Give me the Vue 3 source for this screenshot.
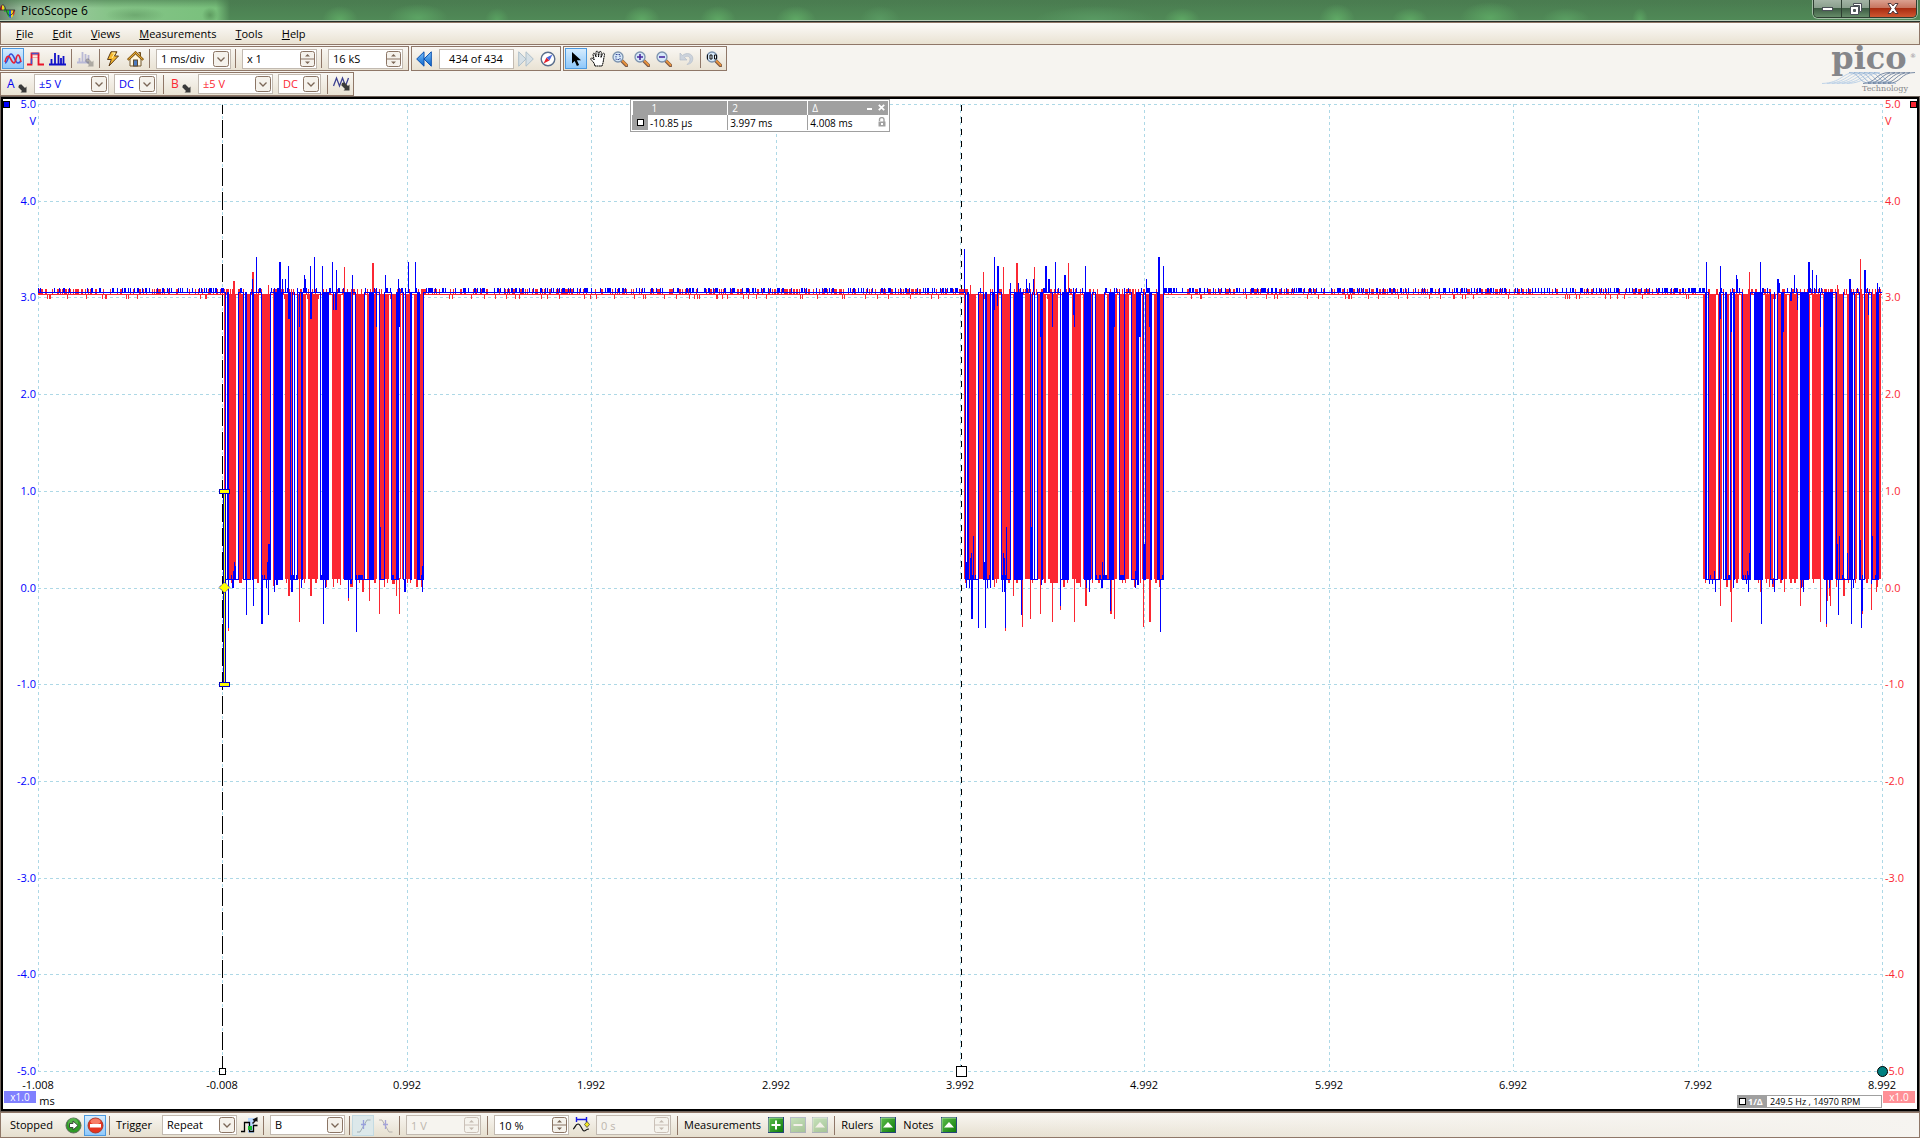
<script setup>
import { ref } from 'vue'

const menus = ['File', 'Edit', 'Views', 'Measurements', 'Tools', 'Help']

const timebase = ref('1 ms/div')
const zoomFactor = ref('x 1')
const samples = ref('16 kS')
const buffer = ref('434 of 434')
const rangeA = ref('±5 V')
const rangeB = ref('±5 V')
const couplingA = ref('DC')
const couplingB = ref('DC')
const triggerMode = ref('Repeat')
const triggerSource = ref('B')
const threshold = ref('1 V')
const preTrigger = ref('10 %')
const delay = ref('0 s')

/* graph geometry */
const plot = { left: 38, right: 1882, top: 104, bottom: 1071 }
const gridX = Array.from({ length: 11 }, (_, i) => Math.round(plot.left + i * 184.4))
const gridY = Array.from({ length: 11 }, (_, i) => Math.round(plot.top + i * 96.7))
const timeLabels = gridX.map((x, i) => ({ x, text: (i - 1.008).toFixed(3) }))
const voltLabels = gridY.map((y, i) => ({ y: y + 4, text: (5 - i).toFixed(1) }))

const HIGH_A = 292
const HIGH_B = 294
const LOW = 579

/* Bursts: bars and levels are [start, width] and [start, end] in pixels from the
   burst origin; spikes are [x, y, width] with x and y in thirds of a pixel. */
const message = {
  blue: [[25, 1], [27, 2], [38, 1], [43, 1], [45, 2], [50, 1], [52, 2], [61, 1], [70, 1], [74, 6], [80, 3], [90, 1], [92, 1], [94, 1], [97, 1], [101, 2], [120, 1], [122, 7], [144, 7], [152, 1], [155, 1], [164, 1], [169, 5], [179, 1], [184, 1], [191, 1], [196, 3], [203, 1], [205, 1], [210, 2], [217, 3], [223, 1]],
  high: [[0, 25], [38, 43], [50, 61], [70, 90], [97, 120], [129, 144], [152, 155], [164, 169], [174, 179], [184, 191], [199, 203], [205, 210], [212, 217], [223, 240]],
  low: [[25, 38], [43, 50], [61, 70], [90, 97], [120, 129], [144, 148], [155, 173], [179, 184], [191, 199], [203, 205], [218, 223]],
  red: [[24, 1], [29, 7], [39, 4], [47, 3], [54, 5], [61, 9], [73, 1], [79, 1], [85, 5], [91, 1], [98, 8], [108, 10], [122, 7], [132, 9], [143, 1], [150, 2], [156, 8], [167, 10], [180, 4], [185, 4], [191, 5], [200, 1], [202, 1], [206, 4], [214, 3], [220, 4]]
}
const bursts = [
  {
    origin: 200, ...message,
    blueUp: [[157, 118], [169, 51], [180, 145], [213, 145], [238, 67, 2], [247, 118], [256, 118], [265, 79], [313, 105], [316, 118], [331, 79], [343, 51], [367, 79], [397, 67], [409, 91], [430, 145], [457, 105], [556, 105], [595, 118], [625, 67], [646, 67]],
    redUp: [[100, 123, 2], [157, 96, 2], [205, 136], [433, 82], [517, 70, 2]],
    blueSag: [[265, 237, 2], [283, 263], [297, 263], [331, 237, 2], [400, 210], [406, 210, 2], [529, 263], [598, 263]],
    blueDown: [[85, 1165], [98, 1046, 2], [139, 1125], [160, 1098], [184, 1152, 2], [199, 1046], [205, 1125], [223, 1058], [230, 1035, 2], [274, 1058, 2], [304, 1046], [370, 1152], [376, 1046], [445, 1074], [451, 1034, 2], [469, 1176], [614, 1058, 2], [667, 1058]],
    blueRise: [[100, 993], [103, 967], [106, 980], [202, 967], [205, 912, 2], [541, 862], [667, 978]],
    redDown: [[85, 1175], [94, 1031], [118, 1031, 3], [173, 1031, 2], [220, 1040], [259, 1031], [265, 1070, 2], [298, 1148], [313, 1031], [331, 1070, 2], [346, 1031, 2], [379, 1043], [400, 1043], [412, 1031], [421, 1037], [445, 1083], [451, 1043, 3], [478, 1031], [487, 1056, 2], [508, 1083], [523, 1031, 2], [538, 1122], [553, 1043], [562, 1031], [577, 1034, 3], [589, 1070], [598, 1122], [622, 1031], [630, 1031], [649, 1043, 2], [664, 1043]]
  },
  {
    origin: 940, ...message,
    blueUp: [[73, 27], [163, 51], [172, 79, 2], [211, 129], [235, 129], [260, 118], [268, 129], [280, 118], [317, 79, 2], [325, 118, 2], [346, 67], [373, 105, 2], [436, 79], [619, 118], [655, 51, 2], [670, 79]],
    redUp: [[91, 136], [130, 96], [190, 82], [229, 70, 2], [283, 82], [385, 70]],
    blueSag: [[163, 210], [172, 198], [301, 291], [337, 263], [400, 225], [403, 263], [523, 263], [598, 291, 2], [628, 263]],
    blueDown: [[79, 1046], [88, 1046], [94, 1137, 2], [115, 1164], [136, 1164], [142, 1046], [151, 1046], [187, 1058], [193, 1058], [196, 1165], [244, 1125], [304, 1035], [361, 1098], [439, 1046], [448, 1058], [484, 1046, 2], [511, 1113], [586, 1046], [592, 1035, 2], [661, 1176]],
    blueRise: [[79, 966], [91, 955], [94, 939], [100, 888], [133, 966], [190, 939], [193, 955], [199, 862], [274, 862, 2], [467, 966], [487, 966], [586, 993], [613, 912, 2]],
    redDown: [[76, 1031], [88, 1031], [163, 1043], [170, 1031], [196, 1175], [204, 1031, 2], [220, 1070], [229, 1031, 2], [247, 1161], [271, 1137], [276, 1031], [301, 1122], [312, 1031, 2], [337, 1148], [331, 1031, 8], [361, 1110], [370, 1043, 2], [382, 1031], [403, 1148], [409, 1031, 4], [421, 1043], [436, 1098, 2], [457, 1031], [475, 1031, 2], [511, 1122, 2], [523, 1137], [547, 1031], [556, 1031], [583, 1043], [601, 1031], [610, 1161], [628, 1148, 2], [646, 1031, 2], [658, 1043]]
  },
  {
    origin: 1690,
    blue: [[15, 2], [18, 1], [29, 1], [33, 1], [35, 2], [40, 1], [43, 2], [52, 1], [60, 1], [64, 5], [69, 4], [80, 1], [84, 1], [87, 1], [91, 2], [110, 9], [134, 9], [146, 1], [153, 1], [159, 4], [164, 1], [169, 1], [174, 1], [181, 1], [186, 3]],
    high: [[0, 18], [29, 33], [41, 52], [60, 80], [87, 110], [119, 134], [143, 146], [159, 169], [174, 181], [187, 192]],
    low: [[17, 29], [33, 41], [52, 60], [64, 72], [80, 87], [134, 140], [146, 160], [169, 174], [181, 187]],
    red: [[13, 2], [18, 8], [28, 1], [30, 2], [37, 2], [41, 1], [45, 4], [51, 9], [75, 5], [81, 2], [88, 4], [93, 4], [99, 9], [119, 1], [122, 9], [133, 1], [145, 1], [147, 7], [157, 2], [165, 2], [170, 3], [175, 4], [181, 5], [189, 2]],
    blueUp: [[49, 67], [91, 79], [139, 105], [142, 118], [211, 67], [262, 118, 2], [268, 129], [313, 105], [355, 67, 2], [367, 91], [379, 105], [478, 118, 2], [523, 91, 2], [562, 129], [568, 142]],
    redUp: [[178, 96], [442, 136], [511, 58]],
    blueSag: [[91, 237], [124, 276], [280, 276], [301, 185, 2], [322, 210], [391, 263], [420, 291, 2], [535, 225]],
    blueDown: [[58, 1034], [67, 1034], [76, 1058], [130, 1046], [169, 1034], [175, 1058], [214, 1152], [248, 1034], [253, 1058], [334, 1046], [340, 1058], [409, 1152], [417, 1046], [445, 1125], [484, 1152], [490, 1046], [514, 1164], [517, 1113], [545, 1034]],
    blueRise: [[73, 993], [172, 993], [178, 939], [334, 912], [442, 912], [448, 888], [472, 939], [511, 900], [547, 888]],
    redDown: [[46, 1031], [91, 1098], [109, 1043, 2], [121, 1056, 2], [124, 1148], [139, 1031, 2], [205, 1031], [211, 1056], [229, 1031], [238, 1043], [247, 1043, 2], [271, 1031, 2], [283, 1056], [301, 1031, 2], [313, 1031, 2], [331, 1098], [337, 1043], [370, 1031], [391, 1148], [409, 1161], [412, 1083], [418, 1070], [421, 1098], [438, 1043], [460, 1070, 2], [475, 1031], [496, 1031], [517, 1122], [530, 1031, 2], [544, 1110], [559, 1056], [562, 1043]]
  }
]

const box = (x, y1, y2, w = 1) => `M${x} ${y1}h${w}V${y2}h${-w}z`
const px = (v) => Math.floor(v / 3)

/* repeatable noise for the idle line */
function noise(seed) {
  let s = seed
  return () => {
    s = (s * 16807) % 2147483647
    return s / 2147483647
  }
}

function buildRed() {
  let d = box(plot.left, HIGH_B, HIGH_B + 1, plot.right - plot.left)
  const rnd = noise(77)
  for (let x = plot.left; x < plot.right; x += 1) {
    const r = rnd()
    if (r < 0.36) d += box(x, 289, HIGH_B)
    else if (r > 0.93) d += box(x, HIGH_B, 299)
  }
  for (const b of bursts) {
    for (const [x, w] of b.red) d += box(b.origin + x, HIGH_B, LOW, w)
    for (const [x, y, w] of b.redUp) d += box(b.origin + px(x), 240 + px(y), HIGH_B, w)
    for (const [x, y, w] of b.redDown) d += box(b.origin + px(x), LOW - 1, 240 + px(y), w)
  }
  return d
}

function buildBlue() {
  const idle = [[38, 224], [424, 964], [1164, 1704]]
  const rnd = noise(4242)
  let d = ''
  for (const [a, b] of idle) {
    d += box(a, HIGH_A, HIGH_A + 1, b - a)
    for (let x = a; x < b; x += 1) if (rnd() < 0.3) d += box(x, 288, HIGH_A)
  }
  for (const b of bursts) {
    for (const [x, w] of b.blue) d += box(b.origin + x, HIGH_A, LOW + 1, w)
    for (const [a, e] of b.high) {
      d += box(b.origin + a, HIGH_A, HIGH_A + 1, e - a)
      for (let x = a; x < e; x += 1) if (rnd() < 0.2) d += box(b.origin + x, 288, HIGH_A)
    }
    for (const [a, e] of b.low) {
      d += box(b.origin + a, LOW, LOW + 1, e - a)
      for (let x = a; x < e; x += 1) if (rnd() < 0.35) d += box(b.origin + x, 575, LOW)
    }
    for (const [x, y, w] of b.blueUp) d += box(b.origin + px(x), 240 + px(y), HIGH_A, w)
    for (const [x, y, w] of b.blueSag) d += box(b.origin + px(x), HIGH_A, 240 + px(y), w)
    for (const [x, y, w] of b.blueDown) d += box(b.origin + px(x), LOW, 240 + px(y), w)
    for (const [x, y, w] of b.blueRise) d += box(b.origin + px(x), 240 + px(y), LOW, w)
  }
  return d
}

const redTrace = buildRed()
const blueTrace = buildBlue()
</script>

<template>
  <div class="window">
    <svg class="defs" aria-hidden="true">
      <defs>
        <linearGradient id="greenBox" x1="0" y1="0" x2="1" y2="1">
          <stop offset="0" stop-color="#5fc04f" />
          <stop offset="1" stop-color="#0c7a08" />
        </linearGradient>
        <linearGradient id="blueArrow" x1="0" y1="0" x2="0" y2="1">
          <stop offset="0" stop-color="#7cc4ff" />
          <stop offset="1" stop-color="#0a63c9" />
        </linearGradient>
        <symbol id="chevron" viewBox="0 0 16 16">
          <rect x=".5" y=".5" width="15" height="15" rx="2" fill="#f5f2ec" stroke="#8b7565" />
          <path d="M4.500 6.500l3.500 3.500 3.500-3.500" fill="none" stroke="#7b6757" stroke-width="1.300" />
        </symbol>
        <symbol id="spin" viewBox="0 0 15 16">
          <rect x=".5" y=".5" width="14" height="15" rx="2" fill="#f5f2ec" stroke="#8b7565" />
          <path d="M0 8h15" stroke="#8b7565" />
          <path d="M5 5.500h5L7.500 3zM5 10.500h5L7.500 13z" fill="#7b6757" />
        </symbol>
        <symbol id="lens" viewBox="0 0 16 16">
          <path d="M9.500 9.500l5 5" stroke="#7c5a48" stroke-width="3.600" stroke-linecap="round" />
          <path d="M10.500 10l4 4" stroke="#e8923c" stroke-width="1.800" stroke-linecap="round" />
          <circle cx="6" cy="6" r="5" fill="#d6e8f8" stroke="#7d93ae" stroke-width="1.300" />
        </symbol>
        <symbol id="cornerArrow" viewBox="0 0 9 9">
          <path d="M1 1l2.200-.8L7 4l1.500-1.500V8.500H2.500L4 7 .3 3.300z" fill="#3a3a3a" />
        </symbol>
        <symbol id="up" viewBox="0 0 16 16">
          <rect x=".5" y=".5" width="15" height="15" fill="url(#greenBox)" stroke="#27457a" />
          <path d="M1 15V1h14" fill="none" stroke="#a9dd9c" />
          <path d="M3 10.500L8 5l5 5.500z" fill="#fff" />
        </symbol>
      </defs>
    </svg>

    <header class="titlebar">
      <svg class="app-icon" width="16" height="18" viewBox="0 0 16 18" aria-hidden="true">
        <path d="M0 8Q.5 3 2 3v5z" fill="#d81b1b" />
        <path d="M2 3q2-.5 3 5H2z" fill="#f0d51f" />
        <path d="M4 5l2 5H4z" fill="#2fae35" />
        <path d="M6 8h3v7q-2-1-3-7z" fill="#18c32c" />
        <path d="M9 8h2v8q-1 0-2-1z" fill="#1e62e0" />
        <path d="M11 8h2v6l-2 2z" fill="#f3d41f" />
        <path d="M13 8h2q0 4-2 6z" fill="#e2401c" />
        <path d="M0 8Q3-3 6 8t9 0" fill="none" stroke="#33303f" stroke-width=".8" />
        <path d="M0 8h15" stroke="#2b2b2b" stroke-width=".8" />
      </svg>
      <h1>PicoScope 6</h1>
      <div class="caption-buttons">
        <button type="button" class="cap" aria-label="Minimize">
          <svg width="12" height="6" viewBox="0 0 12 6"><rect x=".5" y="1.500" width="10" height="3" fill="#fff" stroke="#4b4f58" /></svg>
        </button>
        <button type="button" class="cap" aria-label="Restore">
          <svg width="12" height="12" viewBox="0 0 12 12">
            <path d="M3.500.5h8v8h-2v-6h-6z" fill="#fff" stroke="#4b4f58" />
            <path d="M.5 3.500h8v8h-8zM3.500 6.500v2h2v-2z" fill="#fff" fill-rule="evenodd" stroke="#4b4f58" />
          </svg>
        </button>
        <button type="button" class="cap close" aria-label="Close">
          <svg width="12" height="11" viewBox="0 0 12 11">
            <path d="M1 .5h3l2 2.500 2-2.500h3L7.800 5.500 11 10.500H8L6 8l-2 2.500H1l3.200-5z" fill="#fff" stroke="#4f3a3f" />
          </svg>
        </button>
      </div>
    </header>

    <nav class="menubar">
      <button v-for="m in menus" :key="m" type="button"><u>{{ m[0] }}</u>{{ m.slice(1) }}</button>
    </nav>

    <div class="toolbars">
      <div class="rows">
        <div class="row">
          <div class="toolbar">
            <button type="button" class="tool active" aria-label="Scope mode">
              <svg width="18" height="16" viewBox="0 0 18 16" fill="none" stroke-width="1.600">
                <path d="M1 12C4 12 4 3 7 3s4 9 7 9c1.500 0 2-1 3-2" stroke="#3550d8" />
                <path d="M1 11C2 6 4 4 5.500 6s2.500 6 4.500 6 2-8 4-8 2 4 3 7" stroke="#e52237" />
              </svg>
            </button>
            <button type="button" class="tool" aria-label="Persistence mode">
              <svg width="17" height="14" viewBox="0 0 17 14" fill="none">
                <path d="M5 3h8M5 6V3M5 5.500h6" stroke="#f3a7a7" />
                <path d="M0 12.500h4.500v-11h7v11H17" stroke="#e9152b" stroke-width="1.800" />
                <path d="M4.500 12V6.500M4.500 1.500h7" stroke="#4453c8" stroke-width="1.500" />
              </svg>
            </button>
            <button type="button" class="tool" aria-label="Spectrum mode">
              <svg width="17" height="14" viewBox="0 0 17 14"><path d="M0 12.500h17M2.500 12V7M6 12V1M9.500 12V3M12 12V6M14.500 12V4" stroke="#1010c8" stroke-width="1.800" fill="none" /></svg>
            </button>
            <span class="sep"></span>
            <button type="button" class="tool" disabled aria-label="Spectrum options">
              <svg width="17" height="16" viewBox="0 0 17 16">
                <path d="M0 11.500h12M2.500 11V7M5.500 11V1M8.500 11V3M11.500 9V4" stroke="#b9b9d6" stroke-width="1.800" fill="none" />
                <use href="#cornerArrow" x="8" y="7" width="9" height="9" opacity=".35" />
              </svg>
            </button>
            <span class="sep"></span>
            <button type="button" class="tool" aria-label="Auto setup">
              <svg width="14" height="16" viewBox="0 0 14 16"><path d="M5 .8h6L8.500 5h4L3 15l2.300-6.500H1.500z" fill="#f7b92e" stroke="#5c3c18" /><path d="M6 2h3L6 7" fill="none" stroke="#fff3b0" /></svg>
            </button>
            <button type="button" class="tool" aria-label="Home">
              <svg width="17" height="16" viewBox="0 0 17 16">
                <path d="M3 8v7h11V8L8.500 3z" fill="#fff6dd" stroke="#6e5630" />
                <path d="M11.500 1.500h2V5" fill="#b98b3c" stroke="#6e4d1c" />
                <path d="M.8 9L8.500 1.500 16.200 9" fill="none" stroke="#8a5c14" stroke-width="2.400" />
                <path d="M1.500 8.300L8.500 1.500l7 6.800" fill="none" stroke="#f2b63a" />
                <rect x="6.500" y="9" width="4" height="6" fill="#4a7abf" stroke="#5b4a33" />
              </svg>
            </button>
            <span class="sep"></span>
            <label class="combo w75"><select v-model="timebase" aria-label="Timebase"><option>1 ms/div</option></select><svg width="16" height="16"><use href="#chevron" /></svg></label>
            <span class="sep"></span>
            <label class="combo w75"><input v-model="zoomFactor" type="text" aria-label="Horizontal zoom"><svg width="15" height="16"><use href="#spin" /></svg></label>
            <span class="sep"></span>
            <label class="combo w75"><input v-model="samples" type="text" aria-label="Samples"><svg width="15" height="16"><use href="#spin" /></svg></label>
            <span class="end"></span>
          </div>

          <div class="toolbar">
            <button type="button" class="tool" aria-label="First buffer">
              <svg width="16" height="16" viewBox="0 0 16 16"><path d="M8 .8v14.400L.7 8zM15.300.8v14.400L8 8z" fill="url(#blueArrow)" stroke="#0a4fae" /></svg>
            </button>
            <label class="combo w75"><input v-model="buffer" class="center" type="text" aria-label="Buffer"></label>
            <button type="button" class="tool" disabled aria-label="Next buffer">
              <svg width="16" height="16" viewBox="0 0 16 16"><path d="M.7.8v14.400L8 8zM8 .8v14.400L15.300 8z" fill="#d6e0e6" stroke="#aebfca" /></svg>
            </button>
            <button type="button" class="tool" aria-label="Buffer navigator">
              <svg width="16" height="16" viewBox="0 0 16 16">
                <circle cx="8" cy="8" r="6.800" fill="#fff" stroke="#5a6e8c" stroke-width="1.400" />
                <path d="M3.500 12.500l3-6 3 3z" fill="#e3222c" /><path d="M12.500 3.500l-6 3 3 3z" fill="#4b68dc" />
              </svg>
            </button>
          </div>

          <div class="toolbar">
            <button type="button" class="tool active" aria-label="Select">
              <svg width="12" height="16" viewBox="0 0 12 16"><path d="M2 1v11.500l2.700-2.600 2.200 5 2.200-1-2.200-4.700H11z" fill="#000" /></svg>
            </button>
            <button type="button" class="tool" aria-label="Pan">
              <svg width="17" height="17" viewBox="0 0 17 17"><path d="M5 16l-1-3-3-3.500c-.7-1 .6-2.200 1.700-1.200L4.200 10 3 4.500c-.2-1.400 1.500-1.700 1.900-.4L6 7V2.200C6 .8 8 .8 8.100 2.200L8.500 7l.8-4.800c.3-1.300 2-1 2 .2L11 7.500l1.600-3.700c.6-1.200 2.200-.5 1.900.8L13.500 10l-.5 3-1 3z" fill="#fff" stroke="#000" stroke-dasharray="2 .4" /></svg>
            </button>
            <button type="button" class="tool" aria-label="Marquee zoom">
              <svg width="16" height="16" viewBox="0 0 16 16"><use href="#lens" /><rect x="4" y="3.500" width="4" height="5" fill="none" stroke="#3a4a9a" stroke-dasharray="1.500 1" /></svg>
            </button>
            <button type="button" class="tool" aria-label="Zoom in">
              <svg width="16" height="16" viewBox="0 0 16 16"><use href="#lens" /><path d="M3 6h6M6 3v6" stroke="#4a2aa0" stroke-width="1.600" /></svg>
            </button>
            <button type="button" class="tool" aria-label="Zoom out">
              <svg width="16" height="16" viewBox="0 0 16 16"><use href="#lens" /><path d="M3 6h6" stroke="#4a2aa0" stroke-width="1.600" /></svg>
            </button>
            <button type="button" class="tool" disabled aria-label="Undo zoom">
              <svg width="15" height="15" viewBox="0 0 15 15"><path d="M1 2v7h7L5.500 6.500C8 4 11.500 5.500 11 9c-.2 2-1.500 3-3 4.500 4-.5 6-3 5.800-6.500C13.300 2.500 7.500 1 3.500 4.500z" fill="#ccd3dc" stroke="#b4bdc9" stroke-width=".7" /></svg>
            </button>
            <span class="sep"></span>
            <button type="button" class="tool" aria-label="Zoom to 100 percent">
              <svg width="17" height="16" viewBox="0 0 17 16">
                <use href="#lens" width="16" height="16" />
                <path d="M1.500 3.500V8.500M4 4h2v4H4zM8.500 4h2v4h-2z" fill="#e9f1f8" stroke="#111" />
              </svg>
            </button>
          </div>
        </div>

        <div class="row second">
          <div class="toolbar">
            <button type="button" class="channel a" aria-label="Channel A options">A<svg width="9" height="9"><use href="#cornerArrow" /></svg></button>
            <label class="combo w75 a"><select v-model="rangeA" aria-label="Channel A range"><option>±5 V</option></select><svg width="16" height="16"><use href="#chevron" /></svg></label>
            <label class="combo w43 a"><select v-model="couplingA" aria-label="Channel A coupling"><option>DC</option></select><svg width="16" height="16"><use href="#chevron" /></svg></label>
            <span class="sep wide"></span>
            <button type="button" class="channel b" aria-label="Channel B options">B<svg width="9" height="9"><use href="#cornerArrow" /></svg></button>
            <label class="combo w75 b"><select v-model="rangeB" aria-label="Channel B range"><option>±5 V</option></select><svg width="16" height="16"><use href="#chevron" /></svg></label>
            <label class="combo w43 b"><select v-model="couplingB" aria-label="Channel B coupling"><option>DC</option></select><svg width="16" height="16"><use href="#chevron" /></svg></label>
            <span class="sep wide"></span>
            <button type="button" class="tool" aria-label="Digital inputs">
              <svg width="17" height="16" viewBox="0 0 17 16"><path d="M.5 10L3.500 2l3 8 3-8 3 8 3-8" fill="none" stroke="#3b3f8f" stroke-width="1.300" /><use href="#cornerArrow" x="8" y="6" width="9" height="9" /></svg>
            </button>
          </div>
        </div>
      </div>

      <div class="logo">
        <strong>pico</strong><sup>®</sup>
        <svg width="94" height="12" viewBox="0 0 94 12" fill="none" aria-hidden="true">
          <path v-for="i in 6" :key="i" :d="`M${(i - 1) * 5} 11.500C${i * 5 + 14} 11 ${i * 5 + 16} .5 ${i * 5 + 28} .5`" stroke="#b9cfe6" stroke-width=".9" />
          <path v-for="i in 6" :key="'d' + i" :d="`M${i * 5 + 22} .5C${i * 5 + 34} 1 ${i * 5 + 30} 11 ${i * 5 + 44} 11.500`" stroke="#93b1d3" stroke-width=".9" />
          <path v-for="i in 6" :key="'u' + i" :d="`M${i * 5 + 36} 11.500C${i * 5 + 50} 11 ${i * 5 + 48} .5 ${i * 5 + 63} .5`" stroke="#6b7f9c" stroke-width=".9" />
        </svg>
        <small>Technology</small>
      </div>
    </div>

    <main class="view">
      <svg class="graph" viewBox="3 99 1914 1010" role="img" aria-label="Voltage of channels A and B against time">
        <g class="grid">
          <path v-for="y in gridY" :key="'y' + y" :d="`M${plot.left} ${y + 0.5}H${plot.right}`" />
          <path v-for="x in gridX" :key="'x' + x" :d="`M${x + 0.5} ${plot.top}V${plot.bottom}`" />
        </g>
        <path class="ruler one" d="M222.500 105V1068" />
        <path class="ruler two" d="M961.500 105V1066" />
        <path class="trace red" :d="redTrace" />
        <path class="trace blue" :d="blueTrace" />

        <g class="crisp">
          <rect x="223" y="491" width="3" height="193" fill="#0000c0" />
          <rect x="224" y="491" width="1" height="193" fill="#ff0" />
          <rect x="219.500" y="489.500" width="10" height="4" fill="#ff0" stroke="#0000c0" />
          <rect x="219.500" y="682.500" width="10" height="4" fill="#ff0" stroke="#0000c0" />
          <rect x="3.500" y="101.500" width="6" height="6" fill="#00f" stroke="#000" />
          <rect x="1910.500" y="101.500" width="6" height="6" fill="#fb2732" stroke="#000" />
          <rect x="219.500" y="1068.500" width="6" height="6" fill="#fff" stroke="#000" />
          <rect x="956.500" y="1066.500" width="10" height="10" fill="#fff" stroke="#000" />
        </g>
        <path d="M224.500 582l5.500 5.500-5.500 5.500-5.500-5.500z" fill="#ff0" stroke="#00c" stroke-dasharray="1 1" />

        <g class="left">
          <text v-for="l in voltLabels" :key="l.text" x="36" :y="l.y">{{ l.text }}</text>
          <text x="36" y="125">V</text>
        </g>
        <g class="right">
          <text v-for="l in voltLabels" :key="l.text" x="1885" :y="l.y">{{ l.text }}</text>
          <text x="1885" y="125">V</text>
        </g>
        <g class="time">
          <text v-for="l in timeLabels" :key="l.text" :x="l.x" y="1089">{{ l.text }}</text>
          <text x="47" y="1105">ms</text>
        </g>
        <circle cx="1882.500" cy="1071.500" r="5" fill="#008080" stroke="#000" />
      </svg>

      <section class="ruler-legend">
        <table>
          <thead>
            <tr><th></th><th>1</th><th>2</th><th>Δ</th></tr>
          </thead>
          <tbody>
            <tr><td class="mark"><i class="square"></i></td><td>-10.85 µs</td><td>3.997 ms</td><td>4.008 ms</td></tr>
          </tbody>
        </table>
        <button type="button" class="lg-min" aria-label="Collapse legend"></button>
        <button type="button" class="lg-close" aria-label="Close legend">
          <svg width="7" height="7" viewBox="0 0 7 7"><path d="M.8.8l5.400 5.400M6.200.8L.8 6.200" stroke="#fff" stroke-width="1.800" /></svg>
        </button>
        <svg class="lock" width="8" height="10" viewBox="0 0 8 10" aria-hidden="true"><path d="M1.500 4V2.500c0-2.500 4.500-2.500 4.500 0V5" fill="none" stroke="#a0a0a0" stroke-width="1.400" /><rect x=".5" y="4.500" width="7" height="5" fill="#a0a0a0" /><rect x="3" y="6" width="2" height="2" fill="#fff" /></svg>
      </section>

      <div class="scale scale-a">x1.0</div>
      <div class="scale scale-b">x1.0</div>
      <div class="freq"><span class="freq-key"><i class="square"></i>1/Δ</span><span class="freq-value">249.5 Hz , 14970 RPM</span></div>
    </main>

    <footer class="status">
      <span class="state">Stopped</span>
      <button type="button" class="tool" aria-label="Start">
        <svg width="17" height="17" viewBox="0 0 17 17"><circle cx="8.500" cy="8.500" r="7.500" fill="#2f9a26" stroke="#5c6a5c" /><circle cx="8" cy="6" r="5" fill="#6cc35f" opacity=".6" /><path d="M4.500 6.500h3.500V4l5 4.500L8 13v-2.500H4.500z" fill="#fff" stroke="#3d4a3d" /></svg>
      </button>
      <button type="button" class="tool active" aria-label="Stop">
        <svg width="17" height="17" viewBox="0 0 17 17"><circle cx="8.500" cy="8.500" r="7.500" fill="#e5331f" stroke="#a83a2c" /><ellipse cx="8.500" cy="4.500" rx="5" ry="3" fill="#ff9b83" opacity=".7" /><rect x="3" y="7" width="11" height="3.500" fill="#fff" /></svg>
      </button>
      <span class="sep"></span>
      <label class="caption trig" for="trigger-mode">Trigger</label>
      <span class="combo w75"><select id="trigger-mode" v-model="triggerMode"><option>Repeat</option></select><svg width="16" height="16"><use href="#chevron" /></svg></span>
      <button type="button" class="tool" aria-label="Advanced triggering">
        <svg width="17" height="17" viewBox="0 0 17 17"><rect x="7" y="1" width="6" height="15" fill="#b9d8ff" /><path d="M0 14.500h3.500V5.500h5v9h4v-6h4" fill="none" stroke="#000" stroke-width="1.300" /><path d="M7 11h4" stroke="#18b830" stroke-width="4" /><path d="M11 6l2-2-1.500-1.500L16.500 0v5L15 4l-3 3z" fill="#111" /></svg>
      </button>
      <span class="sep"></span>
      <span class="combo w75"><select v-model="triggerSource" aria-label="Trigger source"><option>B</option></select><svg width="16" height="16"><use href="#chevron" /></svg></span>
      <span class="sep"></span>
      <button type="button" class="tool pale" disabled aria-label="Rising edge">
        <svg width="15" height="15" viewBox="0 0 15 15" fill="none"><path d="M1 14h3l7-12h3.500" stroke="#a2aeb4" /><path d="M5 6.500h5M7.500 2v9" stroke="#98a0dc" stroke-width="1.300" /></svg>
      </button>
      <button type="button" class="tool" disabled aria-label="Falling edge">
        <svg width="15" height="15" viewBox="0 0 15 15" fill="none"><path d="M1 2h3l7 12h3.500" stroke="#b6b2ae" /><path d="M5 6.500h5M7.500 2v9" stroke="#a5a3d8" stroke-width="1.300" /></svg>
      </button>
      <span class="sep"></span>
      <span class="combo w75 off"><input v-model="threshold" type="text" disabled aria-label="Threshold"><svg width="15" height="16"><use href="#spin" /></svg></span>
      <span class="sep wide"></span>
      <span class="combo w75"><input v-model="preTrigger" type="text" aria-label="Pre-trigger"><svg width="15" height="16"><use href="#spin" /></svg></span>
      <button type="button" class="tool" aria-label="Enable trigger delay">
        <svg width="17" height="16" viewBox="0 0 17 16" fill="none"><path d="M0 12c2 0 2-5 5-5s4 7 6 7 2-2 5-2" stroke="#111" stroke-width="1.200" /><path d="M3 2.500h11M3.500 0v5M13.500 0v5" stroke="#1616e8" stroke-width="1.400" /><path d="M14 4.500l2.500 3-2.500 3-2.500-3z" fill="#f2e422" stroke="#333" stroke-width=".7" /></svg>
      </button>
      <span class="combo w75 off"><input v-model="delay" type="text" disabled aria-label="Trigger delay"><svg width="15" height="16"><use href="#spin" /></svg></span>
      <span class="sep wide"></span>
      <span class="caption">Measurements</span>
      <button type="button" class="tool" aria-label="Add measurement">
        <svg width="16" height="16" viewBox="0 0 16 16"><rect x=".5" y=".5" width="15" height="15" fill="url(#greenBox)" stroke="#27457a" /><path d="M1 15V1h14" fill="none" stroke="#a9dd9c" /><path d="M3.500 8h9M8 3.500v9" stroke="#fff" stroke-width="2" /></svg>
      </button>
      <button type="button" class="tool" disabled aria-label="Delete measurement">
        <svg width="16" height="16" viewBox="0 0 16 16" opacity=".3"><rect x=".5" y=".5" width="15" height="15" fill="url(#greenBox)" stroke="#27457a" /><path d="M3.500 8h9" stroke="#fff" stroke-width="2" /></svg>
      </button>
      <button type="button" class="tool" disabled aria-label="Edit measurement">
        <svg width="16" height="16" opacity=".3"><use href="#up" /></svg>
      </button>
      <span class="sep"></span>
      <span class="caption">Rulers</span>
      <button type="button" class="tool" aria-label="Ruler settings"><svg width="16" height="16"><use href="#up" /></svg></button>
      <span class="caption">Notes</span>
      <button type="button" class="tool" aria-label="Notes"><svg width="16" height="16"><use href="#up" /></svg></button>
    </footer>
  </div>
</template>

<style>
body {
  margin: 0;
  background: #f6f4f0;
}
</style>

<style scoped>
.window {
  display: flex;
  flex-direction: column;
  overflow: hidden;
  font: 11px/16px "Open Sans", "Noto Sans", sans-serif;
  color: #000;
  background: #f6f4f0;
}
.defs {
  position: absolute;
  width: 0;
  height: 0;
}
button,
input,
select {
  font: inherit;
  color: inherit;
  margin: 0;
  padding: 0;
  border: 0;
  background: none;
}
svg {
  display: block;
  flex: none;
}

/* title bar */
.titlebar {
  display: flex;
  align-items: flex-start;
  box-sizing: border-box;
  height: 22px;
  border-bottom: 1px solid #26302a;
  box-shadow: inset 0 -1px #b6cdb8;
  background:
    radial-gradient(ellipse 30px 8px at 135px 15px, rgba(70, 120, 72, .35), transparent),
    radial-gradient(ellipse 8px 8px at 210px 15px, rgba(60, 110, 62, .45), transparent),
    radial-gradient(ellipse 18px 14px at 340px 20px, #5ea864, transparent),
    radial-gradient(ellipse 30px 14px at 418px 18px, #5ca464, transparent),
    radial-gradient(ellipse 12px 12px at 497px 20px, #59a261, transparent),
    radial-gradient(ellipse 18px 14px at 642px 20px, #5fa965, transparent),
    radial-gradient(ellipse 18px 14px at 718px 20px, #5ea864, transparent),
    radial-gradient(ellipse 20px 14px at 796px 20px, #5fa965, transparent),
    radial-gradient(ellipse 20px 14px at 880px 20px, #599a62, transparent),
    radial-gradient(ellipse 60px 14px at 1095px 20px, #599a63, transparent),
    radial-gradient(ellipse 18px 12px at 1182px 20px, #5ea864, transparent),
    radial-gradient(ellipse 18px 16px at 1337px 20px, #60ab66, transparent),
    radial-gradient(ellipse 18px 12px at 1410px 20px, #5ea864, transparent),
    radial-gradient(ellipse 30px 16px at 1490px 18px, #5ca663, transparent),
    radial-gradient(ellipse 24px 12px at 1566px 20px, #5a9f62, transparent),
    radial-gradient(ellipse 8px 12px at 1640px 20px, #5ca663, transparent),
    linear-gradient(rgba(74, 124, 80, .6), rgba(74, 124, 80, 0) 8px),
    linear-gradient(90deg, #6b836d 0, #8fb492 20px, #9cc89e 60px, #86c488 110px, #7bc17e 200px, #78c07b 216px, rgba(120, 192, 123, 0) 230px),
    linear-gradient(#4a7c50, #508a57);
}
.app-icon {
  margin-top: 2px;
}
h1 {
  flex: 1;
  margin: 2px 0 0 5px;
  font-size: 12px;
  line-height: 17px;
  font-weight: 400;
}
.caption-buttons {
  display: flex;
  margin-right: 3px;
  border: 1px solid #2d3e31;
  border-top: 0;
  border-radius: 0 0 5px 5px;
  overflow: hidden;
  box-shadow: 0 0 0 1px #a3bfa5;
}
.cap {
  display: flex;
  align-items: center;
  justify-content: center;
  width: 28px;
  height: 17px;
  border-right: 1px solid #2d3e31;
  background: linear-gradient(#a3b4a5 0, #8a9f8d 45%, #3d5c43 50%, #668b69);
}
.cap.close {
  width: 46px;
  border: 0;
  background: linear-gradient(#dba090 0, #c87560 45%, #a92c11 50%, #cf5731);
}

/* menu bar */
.menubar {
  display: flex;
  align-items: center;
  box-sizing: border-box;
  height: 23px;
  margin-bottom: 1px;
  padding-left: 15px;
  gap: 19px;
  border: 1px solid #8f7768;
  background: linear-gradient(#fcfbf9, #e9e2d2);
}

/* toolbars */
.toolbars {
  display: flex;
  justify-content: space-between;
}
.rows {
  display: flex;
  flex-direction: column;
  gap: 1px;
}
.row {
  display: flex;
  gap: 2px;
}
.toolbar {
  display: flex;
  align-items: center;
  box-sizing: border-box;
  height: 25px;
  padding: 0 1px;
  border: 1px solid #8f7768;
  background: linear-gradient(#f9f7f3, #e9e2d3);
}
.second .toolbar {
  height: 24px;
}
.tool {
  display: flex;
  flex: none;
  align-items: center;
  justify-content: center;
  box-sizing: border-box;
  width: 22px;
  height: 21px;
}
.tool.active {
  border: 1px solid #4d9ae0;
  background: linear-gradient(#d6ecfe, #8fc8fa);
}
.tool.pale {
  border: 1px solid #c3dae2;
  background: #dce8ea;
}
.sep {
  flex: none;
  width: 1px;
  height: 19px;
  margin: 0 2px 0 3px;
  background: #8f7768;
}
.sep.wide {
  margin-left: 5px;
}
.end {
  width: 3px;
}
.combo {
  position: relative;
  display: flex;
  flex: none;
  align-items: center;
  box-sizing: border-box;
  height: 20px;
  margin: 0 1px 0 4px;
  padding-right: 1px;
  border: 1px solid #c2bab1;
  background: #fff;
}
.w75 {
  width: 75px;
}
.w43 {
  width: 43px;
}
.combo select,
.combo input {
  flex: 1;
  min-width: 0;
  height: 18px;
  padding-left: 4px;
  appearance: none;
  outline: 0;
}
.combo .center {
  padding: 0;
  text-align: center;
}
.combo svg {
  pointer-events: none;
}
.combo.off {
  background: #f6f4ef;
  color: #bdb6ae;
}
.combo.off svg {
  opacity: .4;
}
.a {
  color: #0000f0;
}
.b {
  color: #fb2732;
}
.channel {
  display: flex;
  align-items: center;
  width: 28px;
  padding-left: 5px;
  gap: 3px;
  font-size: 12px;
}
.channel svg {
  margin-top: 8px;
}

/* brand */
.logo {
  position: relative;
  display: flex;
  flex-direction: column;
  align-items: flex-end;
  width: 94px;
  height: 50px;
  margin-right: 4px;
  color: #85868a;
  font-family: "DejaVu Serif", serif;
}
.logo strong {
  align-self: center;
  height: 26px;
  font-size: 32px;
  line-height: 24px;
  font-weight: 700;
}
.logo sup {
  position: absolute;
  right: 0;
  top: 6px;
  font-size: 6px;
  line-height: 8px;
}
.logo small {
  margin-right: 8px;
  font: 8px/10px "DejaVu Serif", serif;
}

/* graph */
.view {
  position: relative;
  border: 2px solid #000;
  margin: 1px;
  outline: 1px solid #6e625a;
  background: #fff;
}
.graph {
  width: 100%;
  height: auto;
  overflow: visible;
}
.grid path {
  fill: none;
  stroke: #add8e6;
  stroke-dasharray: 3 3;
  shape-rendering: crispEdges;
}
.ruler {
  fill: none;
  stroke: #000;
  shape-rendering: crispEdges;
}
.ruler.one {
  stroke-dasharray: 18 6;
  stroke-dashoffset: 9;
}
.ruler.two {
  stroke-dasharray: 6 6;
}
.trace,
.crisp {
  shape-rendering: crispEdges;
}
.trace.red {
  fill: #fb2732;
}
.trace.blue {
  fill: #00f;
}
.graph text {
  font-size: 11px;
}
.graph .left text {
  fill: #00f;
  text-anchor: end;
}
.graph .right text {
  fill: #fb2732;
}
.graph .time text {
  fill: #000;
  text-anchor: middle;
}
.ruler-legend {
  position: absolute;
  top: 0;
  left: 627px;
  padding: 1px;
  border: 1px solid #a0a0a0;
  background: #fff;
}
.ruler-legend table {
  border-collapse: collapse;
  table-layout: fixed;
  width: 256px;
  font-size: 10px;
  line-height: 14px;
}
.ruler-legend th {
  height: 14px;
  padding: 0 0 0 4px;
  text-align: left;
  font-weight: 400;
  color: #fff;
  background: #a0a0a0;
  border-left: 1px solid #fff;
}
.ruler-legend th:first-child,
.ruler-legend th:nth-child(2) {
  border-left: 0;
}
.ruler-legend th:first-child {
  width: 11px;
}
.ruler-legend td {
  height: 15px;
  padding: 0 0 0 2px;
  border-left: 1px solid #a0a0a0;
}
.ruler-legend .mark {
  padding: 0 0 0 4px;
  background: #a0a0a0;
}
.square {
  display: block;
  box-sizing: border-box;
  width: 7px;
  height: 7px;
  border: 1px solid #000;
  background: #fff;
}
.lg-min {
  position: absolute;
  top: 8px;
  right: 17px;
  width: 5px;
  height: 2px;
  background: #fff;
}
.lg-close {
  position: absolute;
  top: 4px;
  right: 4px;
}
.lock {
  position: absolute;
  right: 3px;
  bottom: 4px;
}
.scale {
  position: absolute;
  bottom: 6px;
  width: 32px;
  font-size: 10px;
  line-height: 12px;
  text-align: center;
  color: #fff;
}
.scale-a {
  left: 1px;
  background: #8080ff;
}
.scale-b {
  right: 2px;
  background: #ff9096;
}
.freq {
  position: absolute;
  right: 35px;
  bottom: 1px;
  display: flex;
  box-sizing: border-box;
  width: 145px;
  height: 13px;
  border: 1px solid #a0a0a0;
  font-size: 9px;
  line-height: 11px;
  background: #fff;
}
.freq-key {
  display: flex;
  align-items: center;
  gap: 2px;
  width: 28px;
  padding-left: 1px;
  color: #fff;
  font-weight: 700;
  background: #a0a0a0;
}
.freq-value {
  padding-left: 3px;
  white-space: nowrap;
}

/* status bar */
.status {
  display: flex;
  align-items: center;
  box-sizing: border-box;
  height: 26px;
  border: 1px solid #8f7768;
  background: linear-gradient(90deg, transparent 50%, #f6f4f0), linear-gradient(#f9f7f3, #e6dfcf);
}
.state {
  width: 52px;
  padding-left: 9px;
}
.caption {
  padding: 0 4px;
}
.caption.trig {
  width: 38px;
}
</style>
